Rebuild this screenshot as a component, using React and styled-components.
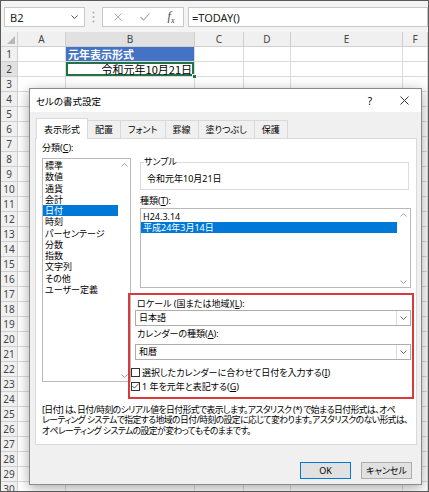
import React from 'react';
import styled, { createGlobalStyle } from 'styled-components';

const GlobalStyle = createGlobalStyle`
  * { box-sizing: border-box; }
  body {
    margin: 0;
    font-family: "Noto Sans", "Noto Sans CJK JP", sans-serif;
    font-feature-settings: "palt";
    color: #000;
  }
`;

const categories = ['標準', '数値', '通貨', '会計', '日付', '時刻', 'パーセンテージ', '分数', '指数', '文字列', 'その他', 'ユーザー定義'];
const tabs = ['表示形式', '配置', 'フォント', '罫線', '塗りつぶし', '保護'];
const columns = ['A', 'B', 'C', 'D', 'E', 'F'];
const rows = Array.from({ length: 30 }, (_, i) => i + 1);

const Frame = styled.div`
  position: relative;
  width: 429px;
  height: 492px;
  overflow: hidden;
  border: 1px solid #5a5a5a;
  background: #fff;
`;

/* ---------- formula bar ---------- */
const FormulaBar = styled.div`
  display: flex;
  align-items: flex-start;
  height: 31px;
  padding: 6px 0 0 3px;
  background: #f3f3f3;
`;

const Box = styled.div`
  display: flex;
  align-items: center;
  height: 20px;
  background: #fff;
  border: 1px solid #c8c8c8;
  font-size: 11px;
  color: #222;
`;

const NameBox = styled(Box)`
  width: 81px;
  justify-content: space-between;
  padding: 0 6px 0 5px;
`;

const Divider = styled.div`
  width: 17px;
  height: 20px;
  display: flex;
  align-items: center;
  justify-content: center;
`;

const FxBox = styled(Box)`
  width: 82px;
  display: grid;
  grid-template-columns: 29px 26px 26px;
  justify-items: center;
`;

const Fx = styled.span`
  font-family: "Liberation Serif", serif;
  font-style: italic;
  font-size: 12px;
  color: #444;
  sub { font-size: 8px; }
`;

const FormulaInput = styled(Box)`
  flex: 1;
  margin-left: 4px;
  padding-left: 3px;
`;

/* ---------- sheet ---------- */
const Sheet = styled.div`
  display: grid;
  grid-template-columns: 17px 48px 129px 49px 47px 112px 1fr;
  grid-auto-rows: 15px;
`;

const Cell = styled.div`
  display: flex;
  align-items: center;
  padding: 0 2px;
  border-right: 1px solid #dadada;
  border-bottom: 1px solid #dadada;
  font-family: "Noto Sans CJK JP", sans-serif;
  font-size: 11px;
  line-height: 14px;
  white-space: nowrap;
  overflow: hidden;
`;

const HeadCell = styled(Cell)`
  justify-content: center;
  padding: 0;
  background: ${p => (p.$active ? '#e1e1e1' : '#f0f0f0')};
  border-color: #cfcfcf;
  color: #444;
  font-family: "Noto Sans", sans-serif;
  font-size: 10px;
`;

const CornerCell = styled(HeadCell)`
  align-items: flex-end;
  justify-content: flex-end;
  padding: 0 2px 2px 0;
`;

const TitleCell = styled(Cell)`
  background: #4472c4;
  color: #fff;
  font-weight: 700;
`;

const SelectedCell = styled(Cell)`
  position: relative;
  justify-content: flex-end;
  overflow: visible;
  box-shadow: inset 0 0 0 2px #217346;
`;

const Handle = styled.span`
  position: absolute;
  right: -3px;
  bottom: -3px;
  width: 5px;
  height: 5px;
  background: #217346;
  border: 1px solid #fff;
  z-index: 1;
`;

/* ---------- dialog ---------- */
const Dialog = styled.div`
  position: absolute;
  left: 28px;
  top: 87px;
  width: 393px;
  height: 397px;
  display: flex;
  flex-direction: column;
  background: #f0f0f0;
  border: 1px solid #8a8a8a;
  box-shadow: 0 3px 12px rgba(0, 0, 0, 0.35);
  font-size: 9px;
  z-index: 2;
`;

const TitleBar = styled.div`
  display: flex;
  align-items: center;
  height: 23px;
  padding-left: 6px;
  background: #fff;
`;

const Title = styled.div`
  flex: 1;
  font-size: 9.5px;
`;

const TitleButton = styled.div`
  width: 34px;
  display: flex;
  justify-content: center;
  font-size: 10px;
`;

const Client = styled.div`
  flex: 1;
  padding: 6px 4px 0 5px;
`;

const Tabs = styled.div`
  position: relative;
  z-index: 1;
  display: flex;
  align-items: flex-end;
  height: 21px;
  margin-bottom: -1px;
  padding-left: 1px;
`;

const Tab = styled.div`
  position: relative;
  z-index: ${p => (p.$active ? 2 : 1)};
  display: flex;
  align-items: center;
  height: ${p => (p.$active ? 21 : 19)}px;
  padding: 0 7px;
  margin-left: -1px;
  background: ${p => (p.$active ? '#fff' : '#f0f0f0')};
  border: 1px solid #d9d9d9;
  border-bottom: ${p => (p.$active ? 'none' : '1px solid #d9d9d9')};
  &:first-child { margin-left: 0; }
`;

const Panel = styled.div`
  position: relative;
  height: 307px;
  padding: 3px 5px 0 6px;
  background: #fff;
  border: 1px solid #d9d9d9;
`;

const PanelBody = styled.div`
  display: grid;
  grid-template-columns: 90px 1fr;
  align-items: start;
`;

const Column = styled.div`
  display: flex;
  flex-direction: column;
  padding-top: ${p => p.$top || 0}px;
`;

const Label = styled.div`
  line-height: 12px;
  margin: ${p => p.$mt || 0}px 0 ${p => p.$mb || 0}px ${p => p.$indent || 0}px;
  white-space: nowrap;
`;

const ListBox = styled.div`
  display: flex;
  width: ${p => p.$w};
  height: ${p => p.$h}px;
  margin: ${p => p.$mt || 0}px 0 0 ${p => p.$indent || 0}px;
  border: 1px solid #b9b9b9;
  background: #fff;
`;

const Items = styled.div`
  flex: 1;
  padding-top: ${p => p.$pt}px;
`;

const Item = styled.div`
  height: ${p => p.$h}px;
  line-height: ${p => p.$h}px;
  padding-left: 2px;
  white-space: nowrap;
  background: ${p => (p.$selected ? '#0078d7' : 'transparent')};
  color: ${p => (p.$selected ? '#fff' : '#000')};
`;

const ScrollTrack = styled.div`
  width: ${p => p.$w}px;
  display: flex;
  flex-direction: column;
  justify-content: space-between;
  align-items: center;
  padding: 4px 0 3px;
`;

const SampleGroup = styled.fieldset`
  margin: 0 2px 0 8px;
  padding: 0 3px 4px 3px;
  min-width: 0;
  border: 1px solid #dcdcdc;
  legend {
    padding: 0;
    line-height: 12px;
  }
`;

const SampleValue = styled.div`
  padding: 5px 0 0 3px;
  line-height: 12px;
`;

const Select = styled.div`
  display: flex;
  height: 16px;
  margin: ${p => p.$mt || 0}px 0 0 3px;
  background: #fff;
  border: 1px solid #adadad;
  span {
    flex: 1;
    line-height: 14px;
    padding-left: 3px;
  }
`;

const SelectArrow = styled.div`
  width: 14px;
  display: flex;
  align-items: center;
  justify-content: center;
  border-left: 1px solid #dcdcdc;
`;

const CheckRow = styled.label`
  display: flex;
  align-items: center;
  height: 14px;
  margin-top: ${p => p.$mt || 0}px;
  margin-left: -1px;
  white-space: nowrap;
`;

const CheckBox = styled.span`
  display: flex;
  align-items: center;
  justify-content: center;
  width: 9px;
  height: 9px;
  margin-right: 2px;
  border: 1px solid #333;
  background: #fff;
`;

const Description = styled.p`
  margin: 12px 0 0;
  font-size: 8.8px;
  line-height: 10.3px;
  letter-spacing: -0.55px;
  white-space: nowrap;
`;

const Annotation = styled.div`
  position: absolute;
  left: 92px;
  top: 154px;
  width: 286px;
  height: 106px;
  border: 2px solid #d83b3b;
  pointer-events: none;
`;

const ButtonRow = styled.div`
  display: flex;
  justify-content: flex-end;
  gap: 10px;
  margin-top: 17px;
  padding-right: 5px;
`;

const Button = styled.button`
  width: 51px;
  height: 17px;
  padding: 0;
  font: inherit;
  font-size: 9px;
  background: #e1e1e1;
  border: 1px solid ${p => (p.$default ? '#0078d7' : '#adadad')};
`;

/* ---------- icons ---------- */
const Chevron = ({ up, color = '#a0a0a0' }) => (
  <svg width="7" height="4" viewBox="0 0 7 4">
    <polyline
      points={up ? '0.5,3.5 3.5,0.5 6.5,3.5' : '0.5,0.5 3.5,3.5 6.5,0.5'}
      fill="none"
      stroke={color}
      strokeWidth="1"
    />
  </svg>
);

const Cross = ({ size = 9, color = '#333' }) => (
  <svg width={size} height={size} viewBox="0 0 9 9">
    <path d="M0.5 0.5L8.5 8.5M8.5 0.5L0.5 8.5" stroke={color} strokeWidth="1" />
  </svg>
);

const Tick = ({ color = '#a6a6a6' }) => (
  <svg width="10" height="8" viewBox="0 0 10 8">
    <polyline points="0.5,4 3.5,7 9.5,0.5" fill="none" stroke={color} strokeWidth="1.1" />
  </svg>
);

const Dots = () => (
  <svg width="3" height="12" viewBox="0 0 3 12">
    {[1.5, 6, 10.5].map(y => <circle key={y} cx="1.5" cy={y} r="1" fill="#b0b0b0" />)}
  </svg>
);

const Corner = () => (
  <svg width="8" height="8" viewBox="0 0 8 8">
    <polygon points="8,0 8,8 0,8" fill="#b8b8b8" />
  </svg>
);

function SheetGrid() {
  return (
    <Sheet>
      <CornerCell><Corner /></CornerCell>
      {columns.map(c => <HeadCell key={c} $active={c === 'B'}>{c}</HeadCell>)}
      {rows.map(r => (
        <React.Fragment key={r}>
          <HeadCell $active={r === 2}>{r}</HeadCell>
          {columns.map(c => {
            if (r === 1 && c === 'B') return <TitleCell key={c}>元年表示形式</TitleCell>;
            if (r === 2 && c === 'B') return <SelectedCell key={c}>令和元年10月21日<Handle /></SelectedCell>;
            return <Cell key={c} />;
          })}
        </React.Fragment>
      ))}
    </Sheet>
  );
}

function FormatDialog() {
  return (
    <Dialog>
      <TitleBar>
        <Title>セルの書式設定</Title>
        <TitleButton>?</TitleButton>
        <TitleButton><Cross /></TitleButton>
      </TitleBar>
      <Client>
        <Tabs>
          {tabs.map((t, i) => <Tab key={t} $active={i === 0}>{t}</Tab>)}
        </Tabs>
        <Panel>
          <PanelBody>
            <Column>
              <Label $mb={4}>分類(<u>C</u>):</Label>
              <ListBox $w="89px" $h={224}>
                <Items $pt={1}>
                  {categories.map(c => <Item key={c} $h={11.25} $selected={c === '日付'}>{c}</Item>)}
                </Items>
                <ScrollTrack $w={12}><Chevron up /><Chevron /></ScrollTrack>
              </ListBox>
            </Column>
            <Column $top={14}>
              <SampleGroup>
                <legend>サンプル</legend>
                <SampleValue>令和元年10月21日</SampleValue>
              </SampleGroup>
              <Label $mt={5} $indent={8}>種類(<u>T</u>):</Label>
              <ListBox $w="auto" $h={80} $mt={1} $indent={8}>
                <Items $pt={2}>
                  <Item $h={11}>H24.3.14</Item>
                  <Item $h={11} $selected>平成24年3月14日</Item>
                </Items>
                <ScrollTrack $w={13}><Chevron up /><Chevron /></ScrollTrack>
              </ListBox>
              <Label $mt={10} $indent={5}>ロケール (国または地域)(<u>L</u>):</Label>
              <Select>
                <span>日本語</span>
                <SelectArrow><Chevron color="#666" /></SelectArrow>
              </Select>
              <Label $mt={2} $indent={5}>カレンダーの種類(<u>A</u>):</Label>
              <Select $mt={4}>
                <span>和暦</span>
                <SelectArrow><Chevron color="#666" /></SelectArrow>
              </Select>
              <CheckRow $mt={5}>
                <CheckBox />
                選択したカレンダーに合わせて日付を入力する(<u>I</u>)
              </CheckRow>
              <CheckRow>
                <CheckBox><Tick color="#222" /></CheckBox>
                1 年を元年と表記する(<u>G</u>)
              </CheckRow>
            </Column>
          </PanelBody>
          <Description>
            [日付] は、日付/時刻のシリアル値を日付形式で表示します。アスタリスク (*) で始まる日付形式は、オペ
            <br />
            レーティング システムで指定する地域の日付/時刻の設定に応じて変わります。アスタリスクのない形式は、
            <br />
            オペレーティング システムの設定が変わってもそのままです。
          </Description>
          <Annotation />
        </Panel>
        <ButtonRow>
          <Button $default>OK</Button>
          <Button>キャンセル</Button>
        </ButtonRow>
      </Client>
    </Dialog>
  );
}

export default function App() {
  return (
    <Frame>
      <GlobalStyle />
      <FormulaBar>
        <NameBox>
          B2
          <Chevron color="#555" />
        </NameBox>
        <Divider><Dots /></Divider>
        <FxBox>
          <Cross size={8} color="#a6a6a6" />
          <Tick />
          <Fx>f<sub>x</sub></Fx>
        </FxBox>
        <FormulaInput>=TODAY()</FormulaInput>
      </FormulaBar>
      <SheetGrid />
      <FormatDialog />
    </Frame>
  );
}
